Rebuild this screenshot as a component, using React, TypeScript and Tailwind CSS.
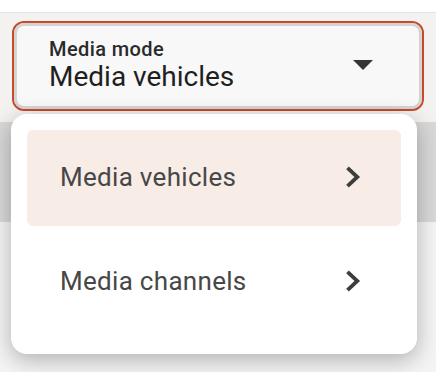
import { useState } from "react";

const options = ["Media vehicles", "Media channels"];

function Chevron() {
  return (
    <svg width="16" height="22" viewBox="0 0 16 22" className="shrink-0 text-[#3d3d3d]">
      <path d="M2.5 1.8l9.8 9.2-9.8 9.2" fill="none" stroke="currentColor" strokeWidth="3.8" />
    </svg>
  );
}

export default function App() {
  const [selected, setSelected] = useState("Media vehicles");

  return (
    <div className="relative h-[372px] w-[436px] overflow-hidden bg-white font-['Roboto','Liberation_Sans',sans-serif]">
      <div className="h-3 bg-white" />
      <div className="border-t border-[#e2e2e2] bg-[#f3f2f1] px-3 pt-2 pb-[11px]">
        <div className="rounded-[12px] border-2 border-[#c9492b]">
          <div className="flex items-center justify-between rounded-[10px] border-[3px] border-[#d4d4d4] bg-[#f8f8f8] pt-[11px] pr-[46px] pb-[13px] pl-8">
            <div>
              <div className="text-[20px] leading-6 font-medium tracking-[0.4px] text-[#2a2a2a]">Media mode</div>
              <div className="text-[28px] leading-8 text-[#1f1f1f]">{selected}</div>
            </div>
            <svg width="20" height="10" viewBox="0 0 20 10" className="text-[#353535]">
              <path d="M0 0h20L10 10z" fill="currentColor" />
            </svg>
          </div>
        </div>
      </div>
      <div className="h-[100px] bg-[#d8d8d8]" />
      <div className="h-[150px] bg-[#f4f4f4]" />

      <div className="absolute top-[114px] left-[11px] w-[406px] h-[240px] rounded-[16px] bg-white p-4 shadow-[0_6px_22px_rgba(0,0,0,0.28)]">
        <div className="flex flex-col gap-2">
          {options.map((option) => (
            <button
              key={option}
              type="button"
              onClick={() => setSelected(option)}
              className={`flex h-[96px] items-center justify-between rounded-[6px] pb-[3px] pl-[33px] pr-[40px] text-left ${
                option === selected ? "bg-[#f7ece6]" : "bg-white"
              }`}
            >
              <span className="text-[26px] leading-8 tracking-[0.3px] text-[#474747]">{option}</span>
              <Chevron />
            </button>
          ))}
        </div>
      </div>
    </div>
  );
}
